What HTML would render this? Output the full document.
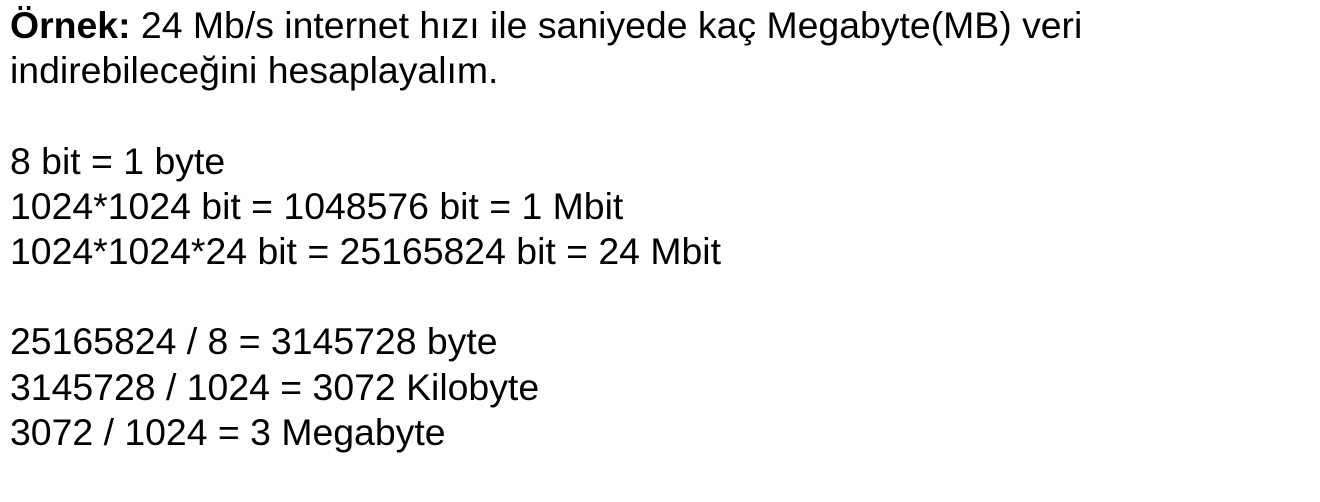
<!DOCTYPE html>
<html><head><meta charset="utf-8"><style>
html,body{margin:0;padding:0;background:#fff;width:1320px;height:502px;overflow:hidden}
.t{position:absolute;left:10px;top:3px;font-family:"Liberation Sans",Arial,sans-serif;font-size:37.4px;line-height:45.2px;color:#000;white-space:pre}
</style></head><body>
<div class="t"><b>Örnek:</b> 24 Mb/s internet hızı ile saniyede kaç Megabyte(MB) veri
indirebileceğini hesaplayalım.

8 bit = 1 byte
1024*1024 bit = 1048576 bit = 1 Mbit
1024*1024*24 bit = 25165824 bit = 24 Mbit

25165824 / 8 = 3145728 byte
3145728 / 1024 = 3072 Kilobyte
3072 / 1024 = 3 Megabyte</div>
</body></html>
